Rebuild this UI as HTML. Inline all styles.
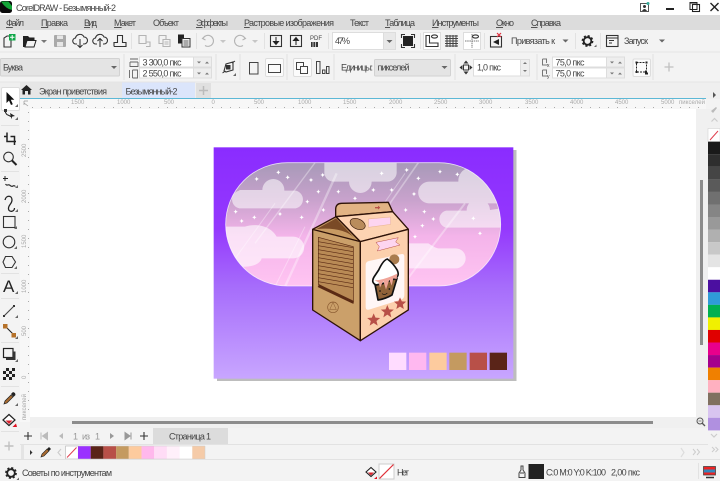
<!DOCTYPE html>
<html><head><meta charset="utf-8"><style>
html,body{margin:0;padding:0;width:720px;height:481px;overflow:hidden;background:#f3f3f3}
svg{display:block;filter:blur(.35px)}
text{font-family:"Liberation Sans",sans-serif;font-size:9px;fill:#444}
.r{font-size:6px;fill:#a8a8a8}
.i{fill:none;stroke:#333;stroke-width:1.1}
.g{fill:none;stroke:#b4b4b4;stroke-width:1.1}
.s{stroke:#e2e2e2;stroke-width:1}
.a{fill:#666}
</style></head><body>
<svg width="720" height="481" viewBox="0 0 720 481" xmlns="http://www.w3.org/2000/svg">
<defs>
<linearGradient id="bg" x1="0" y1="0" x2="0" y2="1"><stop offset="0" stop-color="#8a2cff"/><stop offset=".35" stop-color="#9438fd"/><stop offset=".6" stop-color="#a66cfb"/><stop offset="1" stop-color="#c8a6ff"/></linearGradient>
<linearGradient id="cap" x1="0" y1="0" x2="0" y2="1"><stop offset="0" stop-color="#a799b8"/><stop offset=".3" stop-color="#c8a2cc"/><stop offset=".6" stop-color="#f4b4ea"/><stop offset="1" stop-color="#ffc4f2"/></linearGradient>
<clipPath id="cc"><rect x="62" y="68" width="825" height="370" rx="185"/></clipPath>
<path id="st" d="M0-7Q1-1 7 0Q1 1 0 7Q-1 1-7 0Q-1-1 0-7Z" fill="#fff"/>
<g id="gr"><circle r="3.800" fill="none" stroke="#222" stroke-width="1.800"/><circle r="5" fill="none" stroke="#222" stroke-width="1.800" stroke-dasharray="2.100 1.830"/></g>
</defs>

<!-- chrome backgrounds -->
<rect width="720" height="481" fill="#f3f3f3"/>
<rect width="720" height="15" fill="#fff"/>
<rect y="15" width="720" height="15" fill="#dcdcdc"/>
<rect y="82" width="720" height="17" fill="#efefef"/>
<rect y="51.500" width="720" height="1" fill="#e4e4e4"/>
<rect y="81.500" width="720" height="1" fill="#e4e4e4"/>

<!-- title -->
<rect x="0" y="1" width="12" height="12" rx="2.500" fill="#0a0a0a"/>
<path d="M1 1.500h7.500L12 6v4Q6 9 1 1.500Z" fill="#13a538"/>
<text x="16" y="11" textLength="100">CorelDRAW - Безымянный-2</text>
<rect x="640.500" y="3.500" width="8" height="8" fill="none" stroke="#555"/><circle cx="644.500" cy="6.500" r="1.500" fill="#333"/><path d="M642 11q2.500-4 5 0" fill="#333"/><circle cx="648" cy="3.500" r="1.500" fill="#3a9"/>
<rect x="666" y="8" width="8" height="2" fill="#222"/>
<rect x="692.500" y="4.500" width="7" height="7" fill="none" stroke="#222" stroke-width="1.100"/><rect x="690" y="2.500" width="7" height="7" fill="none" stroke="#222"/><rect x="690" y="2" width="7" height="1.500" fill="#222"/>
<path d="M710.500 3l8 8M718.500 3l-8 8" stroke="#222" stroke-width="1.400" fill="none"/>

<!-- menu -->
<text x="6" y="26" textLength="18"><tspan text-decoration="underline">Ф</tspan>айл</text>
<text x="41" y="26" textLength="27"><tspan text-decoration="underline">П</tspan>равка</text>
<text x="84" y="26" textLength="13"><tspan text-decoration="underline">В</tspan>ид</text>
<text x="114" y="26" textLength="22"><tspan text-decoration="underline">М</tspan>акет</text>
<text x="153" y="26" textLength="26">Объект</text>
<text x="196" y="26" textLength="32"><tspan text-decoration="underline">Э</tspan>ффекты</text>
<text x="244" y="26" textLength="90"><tspan text-decoration="underline">Р</tspan>астровые изображения</text>
<text x="350" y="26" textLength="19">Текст</text>
<text x="385" y="26" textLength="30"><tspan text-decoration="underline">Т</tspan>аблица</text>
<text x="432" y="26" textLength="47"><tspan text-decoration="underline">И</tspan>нструменты</text>
<text x="496" y="26" textLength="18"><tspan text-decoration="underline">О</tspan>кно</text>
<text x="531" y="26" textLength="30"><tspan text-decoration="underline">С</tspan>правка</text>

<!-- toolbar separators -->
<path class="s" d="M131.500 33v16M196.500 33v16M264.500 33v16M328.500 33v16M420.500 33v16M484.500 33v16M575.500 33v16M600.500 33v16"/>

<!-- toolbar icons -->
<path class="i" d="M4 47V38l3-2h4v11Z"/><rect x="9" y="34" width="6.500" height="6.500" fill="#11a84a"/><path d="M12.200 35v4.500M10 37.200h4.500" stroke="#fff"/>
<path d="M23 47V36h5l1.500 1.500h5V47Z" fill="#222"/><path d="M25 47l2-6.500h9l-2 6.500Z" fill="#f3f3f3" stroke="#222"/>
<path d="M41 40h6l-3 3Z" fill="#777"/>
<rect x="54" y="35" width="12" height="12" rx="1" fill="#aaa"/><rect x="57" y="35.500" width="6" height="3.500" fill="#e6e6e6"/><rect x="57" y="42" width="6" height="4.500" fill="#e6e6e6"/>
<path class="i" d="M77 44h-1a3 3 0 0 1-.5-6 4.500 4.500 0 0 1 8.500-1 3.500 3.500 0 0 1 0 7h-1M80 39v8M77.500 45l2.500 2.500 2.500-2.500"/>
<path class="i" d="M97 44h-1a3 3 0 0 1-.5-6 4.500 4.500 0 0 1 8.500-1 3.500 3.500 0 0 1 0 7h-1M100 47v-8M97.500 41l2.500-2.500 2.500 2.500"/>
<path class="i" d="M114 46.500h12v-4h-3.500M114 46.500v-4h3.500M117.500 43V35.500h5V43"/>
<path class="g" d="M139 35.500h7v8h-7ZM146 42h4v4.500h-4"/>
<path class="g" d="M159 35.500h7v4M159 35.500v8h4M163 39.500h7v7h-7ZM164.500 42h4M164.500 44h4"/>
<rect x="178" y="34.500" width="6" height="9" fill="#222"/><rect x="182" y="38.500" width="8" height="8.500" fill="#f3f3f3" stroke="#333"/><path d="M183.500 41h5M183.500 43h5M183.500 45h5" stroke="#333" stroke-width=".7"/>
<path class="g" d="M205 36l-2.500 2.500 3 1.500M203 38.500a5.500 5.500 0 1 1 2 7" stroke="#c8c8c8"/>
<path d="M220 40h6l-3 3Z" fill="#c6c6c6"/>
<path class="g" d="M243 36l2.500 2.500-3 1.500M245 38.500a5.500 5.500 0 1 0-2 7" stroke="#c8c8c8"/>
<path d="M252 40h6l-3 3Z" fill="#c6c6c6"/>
<rect x="270.500" y="35.500" width="11" height="11" class="i"/><path d="M276 37v7M273.500 41.500l2.500 3 2.500-3Z" stroke="#222" fill="#222"/>
<rect x="290.500" y="35.500" width="11" height="11" class="i"/><path d="M296 45v-7M293.500 40.500l2.500-3 2.500 3Z" stroke="#222" fill="#222"/>
<text x="310" y="40" style="font-size:6px">PDF</text><rect x="311" y="42" width="7" height="5" fill="#333"/><path d="M313 42v5M315.500 42v5" stroke="#f3f3f3" stroke-width=".7"/>

<rect x="332.500" y="32.500" width="51" height="17" fill="#fff" stroke="#ddd"/><rect x="383.500" y="32.500" width="12" height="17" fill="#e8e8e8" stroke="#ddd"/><path d="M386.500 40h6l-3 3Z" class="a"/>
<text x="335" y="44" textLength="15">47%</text>
<rect x="403" y="36" width="10" height="10" fill="#222"/><path class="i" d="M401.500 38v-3.500h3.500M411 34.500h3.500V38M414.500 44v3.500H411M405 47.500h-3.500V44"/>

<rect x="423.500" y="32.500" width="17" height="17" fill="#fff" stroke="#ddd"/>
<path class="i" d="M426 35.500v11h12v-3.500h-8.500V35.500Z"/><ellipse cx="434.500" cy="36.500" rx="3" ry="1.600" class="i" stroke-width=".8"/>
<path d="M445 36h13M445 38.500h13M445 41h13M445 43.500h13M445 46h13M447 35v12M450 35v12M453 35v12M456 35v12" stroke="#444" stroke-width="1"/>
<rect x="463.500" y="32.500" width="17" height="17" fill="#fff" stroke="#ddd"/><path d="M472 34v14M465 41h14" stroke="#777" stroke-dasharray="1.500 .7"/><ellipse cx="475.500" cy="36.500" rx="3" ry="1.600" class="i" stroke-width=".8"/>
<rect x="490.500" y="36.500" width="11" height="10.500" class="i"/><path d="M499 39l-6 3 6 3Z" fill="#222"/><path d="M497 33l4 4M501 33l-4 4" stroke="#e03040" stroke-width="1.200"/>
<text x="511" y="44" textLength="44">Привязать к</text>
<path d="M562.500 39.500h6l-3 3Z" class="a"/>
<use href="#gr" x="587.500" y="41"/>
<path d="M594 47l2.500-2.500v2.500Z" fill="#666"/>
<rect x="606.500" y="35.500" width="11.500" height="11" class="i"/><path d="M606.500 38h11.500" stroke="#333"/><path d="M609 40.500h5M609 43h3" stroke="#333"/>
<text x="624" y="44" textLength="24">Запуск</text>
<path d="M659 39.500h6l-3 3Z" class="a"/>

<!-- property bar -->
<rect x=".5" y="58.500" width="119" height="17.500" rx="1" fill="#e4e4e4" stroke="#d2d2d2"/>
<text x="3" y="70.500" textLength="20">Буква</text><path d="M111 66h6l-3 3Z" class="a"/>
<path class="s" d="M124 54v26M216 54v26M240 54v26M287 54v26M334 54v26M455 54v26M537 54v26M653 54v26"/>
<path d="M130 59h8M130 62h8M130 62v4.500h8V62" fill="none" stroke="#666" stroke-width=".9"/>
<path d="M129.500 70v8M132.500 70v8M132.500 70h5v8h-5" fill="none" stroke="#666" stroke-width=".9"/>
<rect x="139.500" y="57" width="54" height="10" fill="#fff" stroke="#ddd"/><rect x="139.500" y="68" width="54" height="10" fill="#fff" stroke="#ddd"/>
<rect x="193.500" y="57" width="18" height="10" fill="#eee" stroke="#ddd"/><rect x="193.500" y="68" width="18" height="10" fill="#eee" stroke="#ddd"/>
<path d="M197 61.500h4l-2 2ZM205 63.500h4l-2-2ZM197 72.500h4l-2 2ZM205 74.500h4l-2-2Z" fill="#777"/>
<text x="142.500" y="65.500" textLength="39">3 300,0 пкс</text>
<text x="142.500" y="76.500" textLength="39">2 550,0 пкс</text>
<path class="i" d="M224 71l2-7 7-2 0 8-7 2Z"/><rect x="226" y="65" width="4.500" height="4.500" fill="#333"/><path d="M222.500 73l3-2M232 63l3-2" stroke="#333"/><path d="M233 76l3-3v3Z" fill="#666"/>
<rect x="249.500" y="62.500" width="8.500" height="11.500" fill="none" stroke="#444"/>
<rect x="265.500" y="58.500" width="18" height="18" rx="1.500" fill="#fbfbfb" stroke="#ddd"/><rect x="268.500" y="64.500" width="12" height="8" fill="none" stroke="#444"/>
<rect x="293.500" y="58.500" width="18" height="18" rx="1.500" fill="#fbfbfb" stroke="#ddd"/><rect x="296.500" y="62.500" width="7" height="7" fill="none" stroke="#444"/><rect x="300.500" y="66.500" width="7" height="7" fill="#fbfbfb" stroke="#444"/>
<rect x="316.500" y="61.500" width="3.500" height="12" fill="none" stroke="#444"/><rect x="322.500" y="70" width="2.500" height="3.500" fill="none" stroke="#444"/><rect x="326.500" y="66.500" width="2.500" height="7" fill="none" stroke="#444"/>
<text x="341" y="70.500" textLength="32">Единицы:</text>
<rect x="374.500" y="59.500" width="76" height="16.500" rx="1" fill="#e4e4e4" stroke="#d2d2d2"/>
<text x="377.500" y="70.500" textLength="32">пикселей</text><path d="M441.500 66h6l-3 3Z" class="a"/>
<path d="M466 60.500l2.500 3h-5ZM466 74.500l2.500-3h-5ZM459.500 67.500l3-2.500v5ZM472.500 67.500l-3-2.500v5Z" fill="#333"/><rect x="463.500" y="65" width="5" height="5" fill="none" stroke="#333"/>
<rect x="473.500" y="59.500" width="47" height="16.500" fill="#fff" stroke="#ddd"/><rect x="520.500" y="59.500" width="9" height="16.500" fill="#eee" stroke="#ddd"/>
<path d="M523 64h4l-2-2ZM523 70h4l-2 2Z" fill="#777"/>
<text x="477" y="70.500" textLength="24">1,0 пкс</text>
<path d="M542.500 59h4v4M542.500 59v6h5" fill="none" stroke="#777"/><text x="547" y="67" style="font-size:5px">x</text>
<path d="M542.500 70h4v4M542.500 70v6h5" fill="none" stroke="#777"/><text x="547" y="78" style="font-size:5px">y</text>
<rect x="552.500" y="57" width="54" height="10" fill="#fff" stroke="#ddd"/><rect x="552.500" y="68" width="54" height="10" fill="#fff" stroke="#ddd"/>
<rect x="606.500" y="57" width="18" height="10" fill="#eee" stroke="#ddd"/><rect x="606.500" y="68" width="18" height="10" fill="#eee" stroke="#ddd"/>
<path d="M610 61.500h4l-2 2ZM618 63.500h4l-2-2ZM610 72.500h4l-2 2ZM618 74.500h4l-2-2Z" fill="#777"/>
<text x="555.500" y="65.500" textLength="29">75,0 пкс</text>
<text x="555.500" y="76.500" textLength="29">75,0 пкс</text>
<rect x="633" y="59" width="17.500" height="17.500" rx="1.500" fill="#fbfbfb" stroke="#ddd"/>
<rect x="636.500" y="62.500" width="10" height="9.500" fill="none" stroke="#222" stroke-dasharray="2 1"/><rect x="635.500" y="61.500" width="2" height="2" fill="#222"/><rect x="645.500" y="61.500" width="2" height="2" fill="#222"/><rect x="635.500" y="71" width="2" height="2" fill="#222"/><path d="M645 70l3 3v1.500h-3Z" fill="#222"/>
<path d="M669 62.500v9M664.500 67h9" stroke="#c0c0c0" stroke-width="1.300"/>

<!-- tabs -->
<rect x="20" y="82.500" width="102" height="16" fill="#e6e6e6"/>
<rect x="122" y="82.500" width="73" height="16" fill="#dbe5fb"/>
<rect x="196" y="83" width="15" height="15" fill="#e0e0e0"/><path d="M203.500 86v9M199 90.500h9" stroke="#bbb" stroke-width="1.500"/>
<path d="M26.500 85l5.500 5h-1.500v4.500h-2.500V91h-3v3.500h-2.500V90H21Z" fill="#222"/>
<text x="39" y="94.500" textLength="68">Экран приветствия</text>
<text x="125.500" y="94.500" textLength="52">Безымянный-2</text>
<path d="M713 92l3 3-3 3Z" fill="#555"/>
<rect x="20" y="98" width="686" height="1" fill="#5cb8d6"/>

<!-- rulers -->
<rect x="20" y="99" width="686" height="10" fill="#f7f7f7"/>
<rect x="20" y="99" width="10" height="323" fill="#f7f7f7"/>
<path d="M24 101v4M24 101h4M24 103l4 3" stroke="#999" stroke-width=".7" fill="none"/>
<text class="r" x="71" y="104">1500</text><text class="r" x="117" y="104">1000</text><text class="r" x="164" y="104">500</text><text class="r" x="211.500" y="104">0</text><text class="r" x="254" y="104">500</text><text class="r" x="298" y="104">1000</text><text class="r" x="343" y="104">1500</text><text class="r" x="389" y="104">2000</text><text class="r" x="434" y="104">2500</text><text class="r" x="479" y="104">3000</text><text class="r" x="525" y="104">3500</text><text class="r" x="570" y="104">4000</text><text class="r" x="615" y="104">4500</text><text class="r" x="661" y="104">5000</text><text class="r" x="679" y="104" textLength="26">пикселей</text>
<path d="M32 107.500H705" stroke="#aaa" stroke-width="1" stroke-dasharray="1 8"/>
<path d="M28.500 112V417" stroke="#aaa" stroke-width="1" stroke-dasharray="1 8"/>
<text class="r" transform="translate(26,157) rotate(-90)">2500</text>
<text class="r" transform="translate(26,203) rotate(-90)">2000</text>
<text class="r" transform="translate(26,248) rotate(-90)">1500</text>
<text class="r" transform="translate(26,293) rotate(-90)">1000</text>
<text class="r" transform="translate(26,336) rotate(-90)">500</text>
<text class="r" transform="translate(26,379) rotate(-90)">0</text>
<text class="r" transform="translate(26,420) rotate(-90)" textLength="26">пикселей</text>

<!-- canvas -->
<rect x="30" y="109" width="666" height="308" fill="#fff"/>
<rect x="696" y="109" width="12" height="313" fill="#f0f0f0"/>
<rect x="30" y="417" width="678" height="11" fill="#f0f0f0"/>
<rect x="700" y="180" width="3" height="165" fill="#8c8c8c"/>
<rect x="72" y="421" width="581" height="3" fill="#8c8c8c"/>
<circle cx="700" cy="421" r="3" fill="none" stroke="#555"/><path d="M702 423l3 3" stroke="#555" stroke-width="1.300"/><path d="M698.500 421h3" stroke="#555" stroke-width=".7"/>

<!-- artwork -->
<rect x="217" y="150" width="299.500" height="231" fill="#bdbdbd"/>
<g transform="translate(205,140) scale(.33333)">
<rect x="26" y="22" width="899" height="694" fill="url(#bg)"/>
<rect x="62" y="68" width="825" height="370" rx="185" fill="url(#cap)"/>
<g clip-path="url(#cc)">
<g stroke="#fff" opacity=".35" fill="none">
<path d="M330 68L150 310" stroke-width="4"/><path d="M395 100L240 440" stroke-width="7"/><path d="M640 68L520 240" stroke-width="5"/><path d="M600 100L440 330" stroke-width="3"/><path d="M780 190L590 440" stroke-width="6"/><path d="M210 190L80 370" stroke-width="3"/><path d="M300 260L210 440" stroke-width="3"/>
</g>
<g fill="#fff" opacity=".55">
<path d="M358 68H575V95a28 28 0 0 1-28 30H500a34 34 0 0 1-68 0H385a28 28 0 0 1-27-30Z"/>
<path d="M103 150H172a33 33 0 0 1 66 0V152H272a27 27 0 0 1 0 53H103a27 27 0 0 1 0-53Z"/>
<path d="M672 125H760a40 40 0 0 1 78-15L887 110V190H672a32 32 0 0 1 0-65Z"/>
<path d="M724 212H785a35 35 0 0 1 70-2L887 205V263H724a26 26 0 0 1 0-51Z"/>
</g>
<g fill="#fff" opacity=".6">
<path d="M62 260H120C150 250 195 255 215 290H265a32 32 0 0 1 0 65H170C165 375 130 385 100 378H62Z"/>
<path d="M590 310H670C685 320 695 325 700 325H752a30 30 0 0 1 0 60H590Z"/>
</g>
<g>
<use href="#st" x="155" y="117"/><use href="#st" x="220" y="97"/><use href="#st" x="248" y="112"/><use href="#st" x="353" y="105"/><use href="#st" x="318" y="120"/><use href="#st" x="400" y="155"/><use href="#st" x="340" y="155"/><use href="#st" x="307" y="185"/><use href="#st" x="355" y="210"/><use href="#st" x="225" y="222"/><use href="#st" x="148" y="232"/><use href="#st" x="110" y="243"/><use href="#st" x="92" y="215"/><use href="#st" x="505" y="150"/><use href="#st" x="560" y="150"/><use href="#st" x="605" y="90"/><use href="#st" x="640" y="115"/><use href="#st" x="705" y="95"/><use href="#st" x="757" y="103"/><use href="#st" x="627" y="162"/><use href="#st" x="602" y="210"/><use href="#st" x="658" y="215"/><use href="#st" x="565" y="225"/><use href="#st" x="685" y="237"/><use href="#st" x="652" y="257"/><use href="#st" x="630" y="290"/><use href="#st" x="825" y="280"/><use href="#st" x="805" y="235"/><use href="#st" x="450" y="175"/><use href="#st" x="530" y="100"/><use href="#st" x="290" y="232"/>
</g>
</g>
<rect x="62" y="68" width="825" height="370" rx="185" fill="none" stroke="#fff" stroke-opacity=".75" stroke-width="2.500"/>
<rect x="552" y="638" width="52" height="52" fill="#ffdcff"/>
<rect x="612" y="638" width="52" height="52" fill="#ffb8f0"/>
<rect x="673" y="638" width="52" height="52" fill="#fdcb9e"/>
<rect x="733" y="638" width="52" height="52" fill="#c49a60"/>
<rect x="794" y="638" width="52" height="52" fill="#b85048"/>
<rect x="854" y="638" width="52" height="52" fill="#5a2418"/>
</g>

<!-- milk carton -->
<g transform="translate(300,195) scale(.33333)" stroke-linejoin="round">
<path d="M107 65V42Q108 25 125 25L265 22L278 50Z" fill="#e2b384" stroke="#2e1208" stroke-width="4"/>
<path d="M225 36h9v-4l7 6-7 6v-4h-9Z" fill="#b85048"/>
<path d="M38 103L108 65L181 140Z" fill="#c79a62"/>
<path d="M50 102L108 70L165 130Q130 95 50 102Z" fill="#7a4a26"/>
<path d="M108 65L278 50L325 103L181 140Z" fill="#fdd3b2" stroke="#2e1208" stroke-width="4"/>
<path d="M38 103L181 140V437L38 345Z" fill="#cba06a" stroke="#2e1208" stroke-width="4"/>
<path d="M181 140L325 103V345L181 437Z" fill="#fcd0ad" stroke="#2e1208" stroke-width="4"/>
<path d="M38 103L108 65L181 140" fill="none" stroke="#2e1208" stroke-width="4"/>
<ellipse cx="173" cy="87" rx="24" ry="15" transform="rotate(25 173 87)" fill="#b98c5c" stroke="#3a1c0c" stroke-width="2"/>
<path d="M205 72L272 66V88L205 97Z" fill="#fdd5f0" stroke="#e8b48c" stroke-width="1.500"/>
<path d="M228 142L295 128L287 141L300 150L232 168L238 155Z" fill="#fdd5f0" stroke="#b85048" stroke-width="1.500"/>
<path d="M197 210Q197 200 207 198L305 177Q313 176 313 184V300Q313 310 305 313L207 344Q197 346 197 336Z" fill="#fff6f6"/>
<g stroke="#5a2a14" fill="none">
<path d="M55 127L160 155V325L55 268Z" fill="#b98a55" stroke-width="2"/>
<path d="M55 140L160 158M55 152L160 170M55 164L160 182M55 176L160 194M55 188L160 206M55 200L160 218M55 212L160 230M55 224L160 242M55 236L160 254M55 248L160 266M55 260L160 278" stroke-width="2"/>
<path d="M55 272L160 322" stroke-width="9"/>
</g>
<circle cx="99" cy="337" r="16" fill="none" stroke="#8a5a30" stroke-width="2"/><path d="M99 322l-10 22h20Z" fill="none" stroke="#8a5a30" stroke-width="1.500"/>
<circle cx="283" cy="193" r="15" fill="#a97c4e"/>
<path d="M225 268L291 250L276 300Q255 312 234 315Z" fill="#8f6238" stroke="#111" stroke-width="5"/>
<path d="M236 225Q250 195 262 192Q280 205 292 226Q300 245 283 250Q250 268 228 270Q212 262 222 246Z" fill="#fff" stroke="#111" stroke-width="5"/>
<path d="M224 256Q250 256 292 236L290 252L280 250L275 272L268 254L258 284L250 258L240 278L236 262Z" fill="#f0a498"/>
<path d="M246 296q8 6 16-2" stroke="#111" stroke-width="2" fill="none"/><circle cx="240" cy="288" r="2.500" fill="#111"/><circle cx="268" cy="282" r="2.500" fill="#111"/>
<g fill="#b85048">
<path d="M221 355l5.500 13 14 1-11 9 3.500 14-12-8-12 8 3.500-14-11-9 14-1Z"/>
<path d="M262 330l5.500 13 14 1-11 9 3.500 14-12-8-12 8 3.500-14-11-9 14-1Z"/>
<path d="M300 307l5.500 12 13 1-10 9 3 13-11.500-7-11 7 3-13-10-9 13-1Z"/>
</g>
</g>

<!-- left toolbar -->
<rect x="1.500" y="87.500" width="18" height="23" rx="1.500" fill="#fff" stroke="#ddd"/>
<path d="M6.500 92v11l2.500-2.500 2 4.500 1.800-.8-2-4.500h3.500Z" fill="#111"/><path d="M15 107l3-3v3Z" fill="#666"/>
<path class="s" d="M1 125.500h18M1 171.500h18M1 273.500h18M1 298.500h18M1 342.500h18M1 386.500h18M1 431.500h18"/>
<path d="M5 111c1 3 2 4 3 4l4 2" stroke="#222" fill="none" stroke-width="1.100"/><rect x="4" y="109" width="3" height="3" fill="#333"/><path d="M10 113l5 3-3 .6-.6 2.600Z" fill="#222"/><path d="M15 120l3-3v3Z" fill="#666"/>
<path d="M7 132.500v9h7.500M10.500 136.500h4v8.500M4 136.500h3M14.500 141.500h1.500" stroke="#222" stroke-width="1.500" fill="none"/>
<circle cx="8.500" cy="157" r="4.800" class="i"/><path d="M12 160.500l4.500 4.500" stroke="#222" stroke-width="2"/>
<path d="M5 176v5M3 178.500h5" stroke="#222"/><path d="M5.500 184c1.500 2.500 2.500 0 4 1s2 2 3.500 1 1.500.5 2.500 0" stroke="#222" fill="none" stroke-width="1.100"/><path d="M15 188l3-3v3Z" fill="#666"/>
<path d="M5 200c1-5 7-5 7 0 0 4-4 5-3.500 9 .5 3.500 6 3 6-1" fill="none" stroke="#222" stroke-width="1.300"/><path d="M15 212l3-3v3Z" fill="#666"/>
<rect x="3.500" y="216.500" width="11.500" height="11" class="i" stroke-width="1.200"/><path d="M14 229l3-3v3Z" fill="#666"/>
<circle cx="9" cy="242" r="5.800" class="i" stroke-width="1.200"/><path d="M14 249l3-3v3Z" fill="#666"/>
<path class="i" d="M5.500 256.500h6.500l3.500 5.500-3.500 5.500H5.500L3 262Z" stroke-width="1.200"/><path d="M14 269l3-3v3Z" fill="#666"/>
<text x="3" y="292" style="font-size:17px;fill:#222">A</text><path d="M15 294l3-3v3Z" fill="#666"/>
<path d="M4 316l10-10" stroke="#444" stroke-width="1.100"/><rect x="3" y="315" width="2" height="2" fill="#333"/><rect x="13" y="305" width="2" height="2" fill="#333"/><path d="M15 318l3-3v3Z" fill="#666"/>
<path d="M5 326l9 9" stroke="#222" stroke-width="1.100"/><rect x="3" y="324" width="4.500" height="4.500" fill="#b6722a"/><rect x="11.500" y="333" width="4.500" height="4.500" fill="#b6722a"/><path d="M15 339l3-3v3Z" fill="#666"/>
<rect x="3.500" y="348.500" width="9.500" height="9" fill="#f3f3f3" stroke="#222" stroke-width="1.200"/><path d="M13 351.500h2.500V360H6v-2.500h7Z" fill="#333"/><path d="M15 362l3-3v3Z" fill="#666"/>
<rect x="3" y="368" width="12" height="12" fill="#222"/><path d="M3 368h3v3H3ZM9 368h3v3H9ZM6 371h3v3H6ZM12 371h3v3h-3ZM3 374h3v3H3ZM9 374h3v3H9ZM6 377h3v3H6ZM12 377h3v3h-3Z" fill="#eee"/>
<path d="M4 404l1-3 6-6 2 2-6 6Z" fill="#a86a30" stroke="#222" stroke-width=".7"/><path d="M11 394l2-2 2 1 .5 2-2 2Z" fill="#222"/><path d="M15 406l3-3v3Z" fill="#666"/>
<path d="M3 420l6-5.500 6 5.500-6 5.500Z" fill="#fff" stroke="#222" stroke-width="1.200"/><path d="M5.500 420.500h7l-3.500 3.500Z" fill="#d8202c"/><path d="M12.500 427l3.500-3.500 1 3.500Z" fill="#e01020"/>
<path d="M9 441.500v9M4.500 446h9" stroke="#c0c0c0" stroke-width="1.400"/>

<!-- palette -->
<rect x="708" y="109" width="12" height="19" fill="#f0f0f0"/>
<path d="M711.500 121.500l3-3 3 3" fill="none" stroke="#ccc" stroke-width="1.200"/>
<path d="M711 111l5-4 1 1-4 5Z" fill="#bbb"/>
<rect x="708" y="128.500" width="12" height="13" fill="#fff" stroke="#ccc" stroke-width=".5"/><path d="M710 140l8-9" stroke="#e04050"/>
<rect x="708" y="141.700" width="12" height="12.600" fill="#1a1a1a"/>
<rect x="708" y="154.250" width="12" height="12.600" fill="#2e2e2e"/>
<rect x="708" y="166.800" width="12" height="12.600" fill="#454545"/>
<rect x="708" y="179.350" width="12" height="12.600" fill="#5a5a5a"/>
<rect x="708" y="191.900" width="12" height="12.600" fill="#707070"/>
<rect x="708" y="204.450" width="12" height="12.600" fill="#858585"/>
<rect x="708" y="217" width="12" height="12.600" fill="#999"/>
<rect x="708" y="229.550" width="12" height="12.600" fill="#b0b0b0"/>
<rect x="708" y="242.100" width="12" height="12.600" fill="#c8c8c8"/>
<rect x="708" y="254.650" width="12" height="12.600" fill="#e4e4e4"/>
<rect x="708" y="267.200" width="12" height="12.600" fill="#fff"/>
<rect x="708" y="279.750" width="12" height="12.600" fill="#4b0fa0"/>
<rect x="708" y="292.300" width="12" height="12.600" fill="#2f9bd8"/>
<rect x="708" y="304.850" width="12" height="12.600" fill="#00b050"/>
<rect x="708" y="317.400" width="12" height="12.600" fill="#f0f000"/>
<rect x="708" y="329.950" width="12" height="12.600" fill="#e00000"/>
<rect x="708" y="342.500" width="12" height="12.600" fill="#e8008c"/>
<rect x="708" y="355.050" width="12" height="12.600" fill="#a5008c"/>
<rect x="708" y="367.600" width="12" height="12.600" fill="#f08000"/>
<rect x="708" y="380.150" width="12" height="12.600" fill="#ffb0c0"/>
<rect x="708" y="392.700" width="12" height="12.600" fill="#807060"/>
<rect x="708" y="405.250" width="12" height="12.600" fill="#d8c4f0"/>
<rect x="708" y="417.800" width="12" height="12.600" fill="#b090e0"/>
<path d="M711 434l3 3 3-3" fill="none" stroke="#ccc" stroke-width="1.200"/>
<path d="M712 447l2.500 2.500-2.500 2.500M715.500 447l2.500 2.500-2.500 2.500" fill="none" stroke="#ccc"/>

<!-- page nav -->
<rect x="20" y="428" width="688" height="16.500" fill="#f3f3f3"/>
<rect x="153" y="428" width="75" height="16" fill="#dcdcdc"/>
<path d="M28 432v8M24 436h8" stroke="#333" stroke-width="1.100"/>
<path d="M41 432.500v7M47.500 432.500l-5 3.500 5 3.500Z" fill="#bbb" stroke="#bbb"/>
<path d="M63 433v6l-4-3Z" fill="#bbb"/>
<text x="73" y="439.500" textLength="4" style="fill:#999">1</text><text x="82" y="439.500" textLength="8" style="fill:#999">из</text><text x="95" y="439.500" textLength="4" style="fill:#999">1</text>
<path d="M110 433v6l4-3Z" fill="#999"/>
<path d="M125 432.500l5 3.500-5 3.500ZM131 432.500v7" fill="#999" stroke="#999"/>
<path d="M144 432v8M140 436h8" stroke="#333" stroke-width="1.100"/>
<text x="169" y="439.500" textLength="42">Страница 1</text>
<rect x="20" y="444" width="688" height="1" fill="#e2e2e2"/>

<!-- document palette -->
<rect x="21" y="445" width="3" height="14" fill="#e4e4e4"/>
<path d="M30 450v5l2.500-2.500Z" fill="#333"/>
<path d="M41 457l1-3 5-5 2 2-5 5Z" fill="#a86a30" stroke="#222" stroke-width=".6"/><path d="M47 449l2-2 2 2-2 2Z" fill="#222"/>
<path d="M61 449l-3 3.500 3 3.500" fill="none" stroke="#ccc" stroke-width="1.100"/>
<rect x="65.500" y="446" width="12.700" height="13" fill="#fff" stroke="#aaa" stroke-width=".5"/><path d="M67 457.500l9.500-10" stroke="#e04050"/>
<rect x="78" y="446" width="12.700" height="13" fill="#9a30ff"/><rect x="90.700" y="446" width="12.700" height="13" fill="#5a2418"/><rect x="103.400" y="446" width="12.700" height="13" fill="#b85048"/><rect x="116.100" y="446" width="12.700" height="13" fill="#c49a60"/><rect x="128.800" y="446" width="12.700" height="13" fill="#fdcb9e"/><rect x="141.500" y="446" width="12.700" height="13" fill="#ffb8ec"/><rect x="154.200" y="446" width="12.700" height="13" fill="#ffdcf6"/><rect x="166.900" y="446" width="12.700" height="13" fill="#fff0fa"/><rect x="179.600" y="446" width="12.700" height="13" fill="#fff"/><rect x="192.300" y="446" width="12.700" height="13" fill="#f5cba8"/>
<path d="M65.500 446h139.500v13H65.500Z" fill="none" stroke="#ccc" stroke-width=".5"/>
<path d="M681 448l3 4.500-3 4.500" fill="none" stroke="#ddd" stroke-width="1.200"/>
<path d="M693 449l2.500 3-2.500 3M697 449l2.500 3-2.500 3" fill="none" stroke="#ccc"/>
<rect y="459" width="720" height="1" fill="#e2e2e2"/>

<!-- status -->
<use href="#gr" x="11" y="473"/><path d="M16.500 480l2.500-2.500v2.500Z" fill="#666"/>
<text x="22" y="476" textLength="90">Советы по инструментам</text>
<path d="M366 472l5-4.500 5 4.500-5 4.500Z" fill="#fff" stroke="#222" stroke-width="1.100"/><path d="M368 472.500h6l-3 3Z" fill="#d8202c"/><path d="M374 479l3-2.500v2.500Z" fill="#e01020"/>
<rect x="379" y="464" width="15" height="15" fill="#fff" stroke="#ccc"/><path d="M379.500 478.500l14-14" stroke="#e03038" stroke-width="1.200"/>
<text x="397" y="475.500" textLength="12">Нет</text>
<path d="M519 473l2-3v-4h2v4l2 3v4.500h-6Z" fill="#f3f3f3" stroke="#444"/><path d="M520 473h4" stroke="#444"/>
<rect x="528.500" y="464" width="15.500" height="15" fill="#222"/>
<text x="546" y="475.500" textLength="60">C:0 M:0 Y:0 K:100</text>
<text x="611" y="475.500" textLength="29">2,00 пкс</text>
<path d="M698.500 463v16" stroke="#e2e2e2"/>
<rect x="703.500" y="466.500" width="12" height="8.500" fill="#e22" stroke="#444" stroke-width=".8"/><rect x="704" y="469.500" width="11" height="3" fill="#38b"/><path d="M706 477.500h8" stroke="#333" stroke-width="1.500"/>
</svg>
</body></html>
